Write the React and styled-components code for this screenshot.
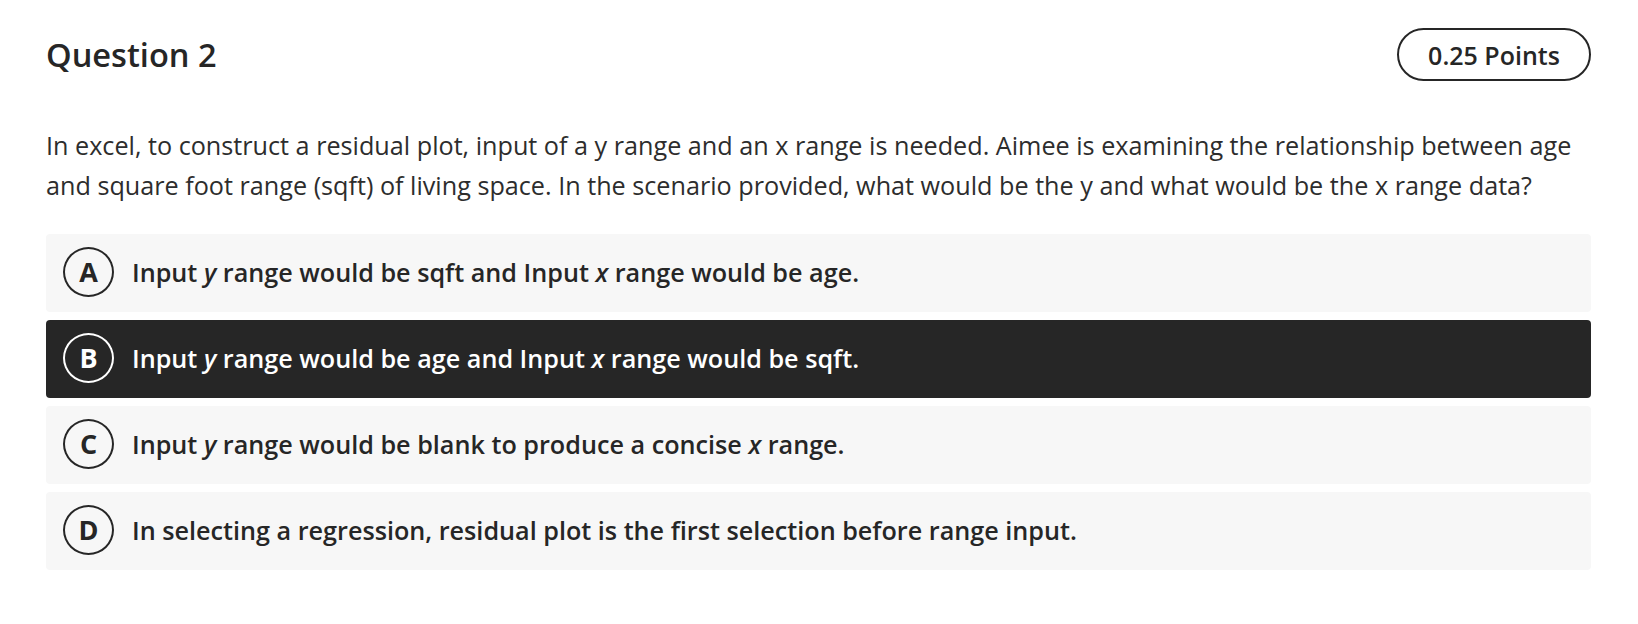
import React from "react";
import styled, { createGlobalStyle } from "styled-components";

const GlobalStyle = createGlobalStyle`
  body {
    margin: 0;
    background: #ffffff;
    font-family: "Open Sans", "Noto Sans", sans-serif;
    color: #262626;
  }
`;

const options = [
  {
    letter: "A",
    parts: ["Input ", { i: "y" }, " range would be sqft and Input ", { i: "x" }, " range would be age."],
  },
  {
    letter: "B",
    selected: true,
    parts: ["Input ", { i: "y" }, " range would be age and Input ", { i: "x" }, " range would be sqft."],
  },
  {
    letter: "C",
    parts: ["Input ", { i: "y" }, " range would be blank to produce a concise ", { i: "x" }, " range."],
  },
  {
    letter: "D",
    parts: ["In selecting a regression, residual plot is the first selection before range input."],
  },
];

function App() {
  return (
    <>
      <GlobalStyle />
      <Page>
        <Header>
          <Title>Question 2</Title>
          <Points>0.25 Points</Points>
        </Header>
        <Prompt>
          In excel, to construct a residual plot, input of a y range and an x range is needed. Aimee is
          examining the relationship between age and square foot range (sqft) of living space. In the
          scenario provided, what would be the y and what would be the x range data?
        </Prompt>
        <Options>
          {options.map((opt) => (
            <Option key={opt.letter} $selected={opt.selected}>
              <Letter $selected={opt.selected}>{opt.letter}</Letter>
              <OptionText>
                {opt.parts.map((p, j) =>
                  typeof p === "string" ? <span key={j}>{p}</span> : <Var key={j}>{p.i}</Var>
                )}
              </OptionText>
            </Option>
          ))}
        </Options>
      </Page>
    </>
  );
}

export default App;

const Page = styled.div`
  padding: 28px 47px 40px 46px;
`;

const Header = styled.div`
  display: flex;
  justify-content: space-between;
  align-items: center;
`;

const Title = styled.h2`
  margin: 0;
  font-size: 32.6px;
  font-weight: 600;
  color: #262626;
`;

const Points = styled.div`
  box-sizing: border-box;
  height: 53px;
  width: 194px;
  display: flex;
  align-items: center;
  justify-content: center;
  border: 2px solid #262626;
  border-radius: 27px;
  font-size: 25px;
  font-weight: 600;
`;

const Prompt = styled.p`
  margin: 44px 0 29px;
  font-size: 25.2px;
  line-height: 40px;
  color: #2d2d2d;
`;

const Options = styled.div`
  display: flex;
  flex-direction: column;
  gap: 8px;
`;

const Option = styled.div`
  display: flex;
  align-items: center;
  gap: 18px;
  height: 78px;
  box-sizing: border-box;
  padding: 0 17px 3px;
  border-radius: 4px;
  background: ${(p) => (p.$selected ? "#262626" : "#f7f7f7")};
  color: ${(p) => (p.$selected ? "#ffffff" : "#262626")};
`;

const Letter = styled.div`
  box-sizing: border-box;
  width: 51px;
  height: 50px;
  flex: none;
  display: flex;
  align-items: center;
  justify-content: center;
  border: 2px solid ${(p) => (p.$selected ? "#ffffff" : "#262626")};
  border-radius: 50%;
  font-size: 27px;
  font-weight: 700;
`;

const OptionText = styled.div`
  font-size: 25.2px;
  font-weight: 600;
`;

const Var = styled.em`
  font-style: italic;
`;
